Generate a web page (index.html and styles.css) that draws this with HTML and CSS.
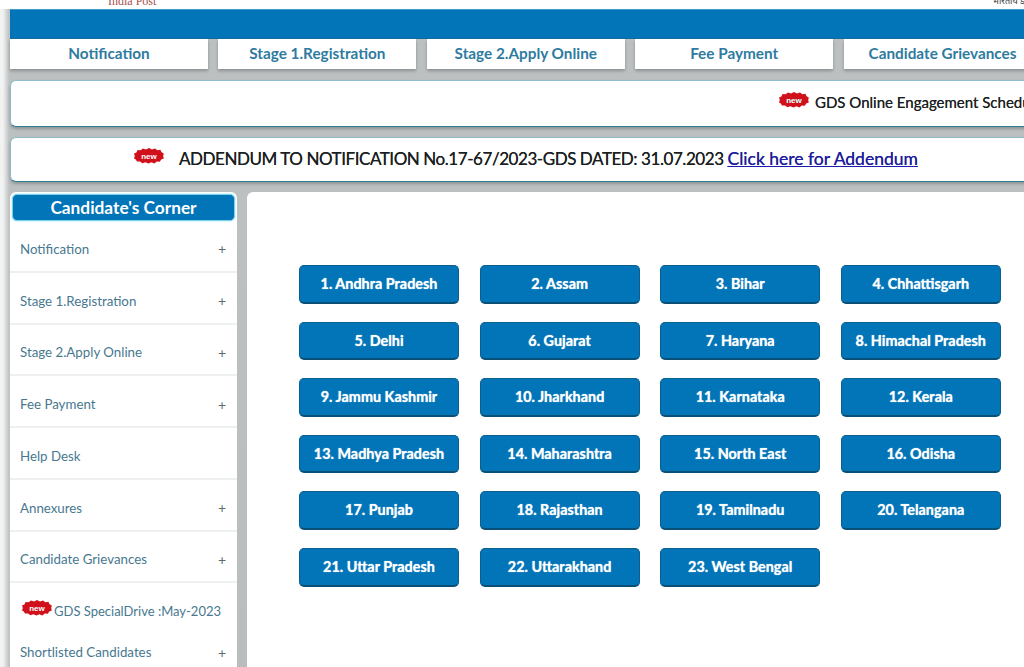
FILE: index.html
```html
<!DOCTYPE html>
<html lang="en">
<head>
<meta charset="utf-8">
<title>GDS Online Engagement</title>
<link rel="stylesheet" href="styles.css">
</head>
<body>
<svg class="defs" width="0" height="0" aria-hidden="true">
  <symbol id="new" viewBox="0 0 30 16">
    <path fill="#d0111b" d="M15 0l3 1.600L21 .4l2.400 1.800 3-.4 1.200 2.400 2.200 1.200-.6 2.600.6 2.600-2.600 1-1.400 2.200-3-.2-2.400 1.800-3-1.200-3 1.400-3-1.400-3 1-2.400-1.800-3 .2-1.200-2.200L0 10.600.8 8 0 5.600l2.400-1.200L3.600 2l3 .2L9 .4l3 1.200z"/>
    <text x="15" y="11" text-anchor="middle" class="new-text">new</text>
  </symbol>
</svg>
<div class="page">
  <div class="topstrip">
    <span class="post">India Post</span>
    <span class="hindi">भारतीय डाक</span>
  </div>
  <div class="bluebar"></div>
  <nav class="tabs">
    <a class="tab">Notification</a>
    <a class="tab">Stage 1.Registration</a>
    <a class="tab">Stage 2.Apply Online</a>
    <a class="tab">Fee Payment</a>
    <a class="tab">Candidate Grievances</a>
  </nav>
  <div class="notice ticker">
    <svg class="new"><use href="#new"/></svg>
    <span>GDS Online Engagement Schedule</span>
  </div>
  <div class="notice addendum">
    <svg class="new"><use href="#new"/></svg>
    <span class="add-text">ADDENDUM TO NOTIFICATION No.17-67/2023-GDS DATED: 31.07.2023 <a class="link">Click here for Addendum</a></span>
  </div>
  <div class="columns">
    <aside class="side">
      <h2 class="side-title">Candidate's Corner</h2>
      <ul class="menu">
        <li class="item"><span>Notification</span><b>+</b></li>
        <li class="item"><span>Stage 1.Registration</span><b>+</b></li>
        <li class="item"><span>Stage 2.Apply Online</span><b>+</b></li>
        <li class="item"><span>Fee Payment</span><b>+</b></li>
        <li class="item"><span>Help Desk</span></li>
        <li class="item"><span>Annexures</span><b>+</b></li>
        <li class="item"><span>Candidate Grievances</span><b>+</b></li>
        <li class="item plain drive"><svg class="new small"><use href="#new"/></svg><span>GDS SpecialDrive :May-2023</span></li>
        <li class="item plain short"><span>Shortlisted Candidates</span><b>+</b></li>
      </ul>
    </aside>
    <main class="panel">
      <div class="states">
        <a class="state">1. Andhra Pradesh</a>
        <a class="state">2. Assam</a>
        <a class="state">3. Bihar</a>
        <a class="state">4. Chhattisgarh</a>
        <a class="state">5. Delhi</a>
        <a class="state">6. Gujarat</a>
        <a class="state">7. Haryana</a>
        <a class="state">8. Himachal Pradesh</a>
        <a class="state">9. Jammu Kashmir</a>
        <a class="state">10. Jharkhand</a>
        <a class="state">11. Karnataka</a>
        <a class="state">12. Kerala</a>
        <a class="state">13. Madhya Pradesh</a>
        <a class="state">14. Maharashtra</a>
        <a class="state">15. North East</a>
        <a class="state">16. Odisha</a>
        <a class="state">17. Punjab</a>
        <a class="state">18. Rajasthan</a>
        <a class="state">19. Tamilnadu</a>
        <a class="state">20. Telangana</a>
        <a class="state">21. Uttar Pradesh</a>
        <a class="state">22. Uttarakhand</a>
        <a class="state">23. West Bengal</a>
      </div>
    </main>
  </div>
</div>
</body>
</html>
```
FILE: styles.css
```css
* { box-sizing: border-box; }
html, body { margin: 0; height: 100%; overflow: hidden; }
body {
  width: 1024px;
  height: 667px;
  background: linear-gradient(90deg, #f1f2f2 0, #f1f2f2 3px, #bfc2c3 9px);
  font-family: Lato, "Open Sans", sans-serif;
  color: #1f2a30;
}
.defs { position: absolute; }
.page {
  width: 1034px;
  height: 667px;
  margin-left: 10px;
  background: linear-gradient(180deg, #bcc0c1 0, #bcc0c1 190px, #b9bdbe 100%);
}
.topstrip {
  height: 9px;
  background: #fff;
  margin-left: -10px;
  padding-left: 108px;
  display: flex;
  justify-content: space-between;
  overflow: hidden;
  line-height: 8px;
}
.post { font-family: "Liberation Serif", serif; font-size: 12px; color: #a8504f; margin-top: -3px; }
.hindi { font-family: "Noto Sans", sans-serif; font-size: 9px; color: #333; margin: -3px 10px 0 0; }
.bluebar {
  height: 30px;
  background: #0175b8;
  border-top: 1px solid #3e9bc8;
  border-bottom: 1px solid #0e6a9a;
}
.tabs { display: flex; gap: 10.400px; height: 31px; }
.tab {
  flex: 0 0 198px;
  height: 30px;
  background: #fff;
  box-shadow: 0 2px 3px #8a8f90;
  color: #2e7b9f;
  font-weight: 700;
  font-size: 15.300px;
  line-height: 28px;
  text-align: center;
}
.notice {
  background: #fff;
  border: 1px solid #8fbccb;
  border-bottom-color: #2f7f93;
  border-radius: 6px 0 0 6px;
  display: flex;
  align-items: center;
  color: #1a1f22;
  box-shadow: 0 2px 3px #8f9495;
}
.ticker { margin-top: 10px; height: 47px; padding: 0 0 4px 768px; font-size: 15px; white-space: nowrap; text-shadow: 0 0 .6px #444; }
.ticker .new { margin-top: -4px; }
.addendum { margin-top: 10px; height: 45px; padding: 0 0 2px 123px; white-space: nowrap; }
.add-text { font-size: 17px; letter-spacing: -.44px; text-shadow: 0 0 .6px #333; }
.new { width: 30px; height: 16px; flex: none; margin: -6px 6px 0 0; }
.addendum .new { margin-right: 15px; margin-top: -5px; }
.new.small { margin: -6px 2px 0 0; }
.new-text { font: 700 8px "Liberation Sans", sans-serif; fill: #fff; }
.link { color: #1c1cae; text-decoration: underline; font-size: 17.500px; letter-spacing: 0; }
.columns { display: flex; gap: 10px; margin-top: 10px; height: 475px; }
.side { width: 227px; flex: none; background: #fff; padding-top: 2px; border-radius: 6px 6px 0 0; }
.side-title {
  margin: 0 2px;
  height: 27px;
  background: #0175b8;
  border: 1px solid #7ad3ea;
  border-radius: 5px;
  box-shadow: 0 0 2px #8edcf0;
  color: #fff;
  font-size: 17.300px;
  font-weight: 700;
  line-height: 25px;
  text-align: center;
}
.menu { list-style: none; margin: 0; padding: 0; }
.item {
  height: 51.750px;
  padding: 6px 11px 0 10px;
  display: flex;
  align-items: center;
  justify-content: space-between;
  font-size: 13.300px;
  color: #47788f;
  border-bottom: 2px solid #eeefef;
}
.item b { font-weight: 400; font-size: 14px; color: #5d6b72; }
.plain { border-bottom: none; }
.drive { height: 50px; justify-content: flex-start; padding: 5px 0 0 12px; font-size: 13px; }
.short { height: 34px; padding-top: 4px; }
.panel { flex: 1; background: #fff; border-radius: 6px 0 0 0; padding: 73px 0 0 52px; }
.states {
  display: grid;
  grid-template-columns: repeat(4, 160px);
  column-gap: 20.600px;
  grid-auto-rows: 38.700px;
  row-gap: 17.900px;
}
.state {
  background: #0175b8;
  border: 1px solid #0b5f8e;
  border-bottom: 2px solid #0a4f75;
  border-radius: 5px;
  color: #fff;
  text-shadow: 0 0 1px #cfe8f5;
  font-size: 14.400px;
  font-weight: 700;
  line-height: 36px;
  text-align: center;
  white-space: nowrap;
}
```
